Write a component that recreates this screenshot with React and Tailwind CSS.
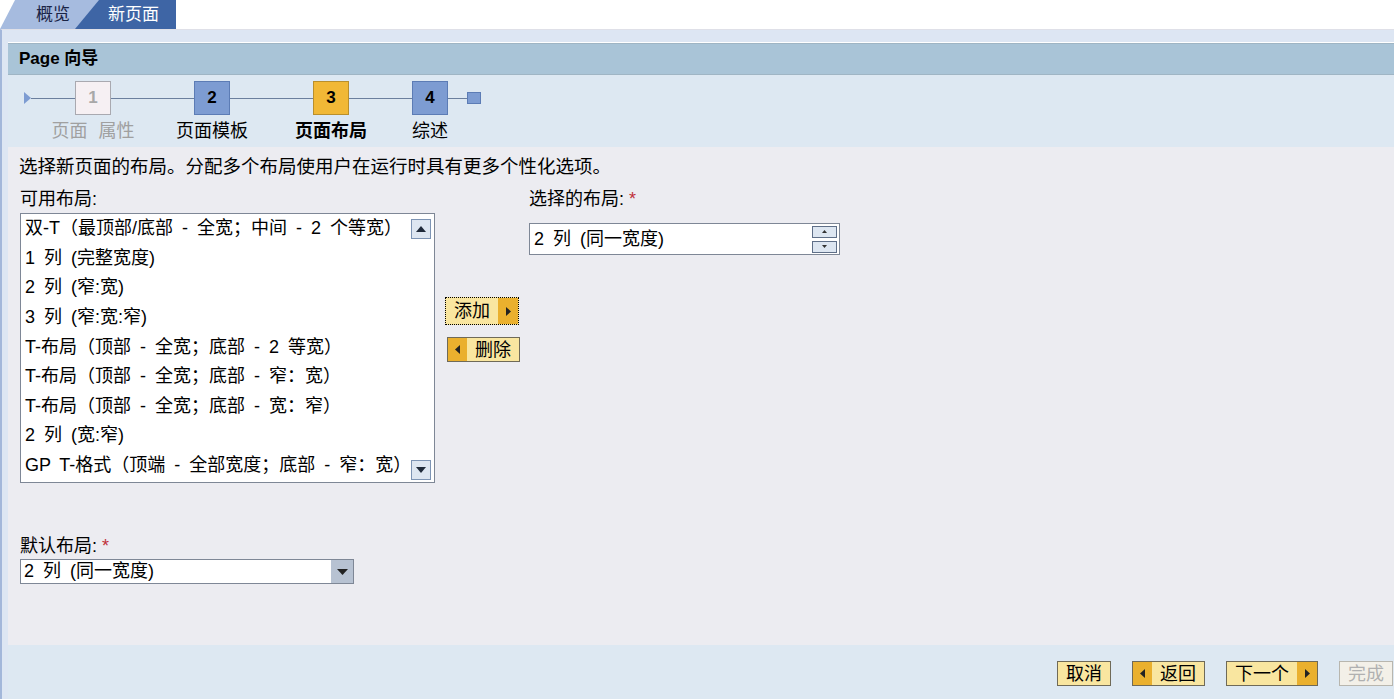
import React from "react";

const font = "font-['Liberation_Sans','Noto_Sans_CJK_SC',sans-serif]";

const layouts = [
  "双-T（最顶部/底部 - 全宽；中间 - 2 个等宽）",
  "1 列 (完整宽度)",
  "2 列 (窄:宽)",
  "3 列 (窄:宽:窄)",
  "T-布局（顶部 - 全宽；底部 - 2 等宽）",
  "T-布局（顶部 - 全宽；底部 - 窄：宽）",
  "T-布局（顶部 - 全宽；底部 - 宽：窄）",
  "2 列 (宽:窄)",
  "GP T-格式（顶端 - 全部宽度；底部 - 窄：宽）",
];

const steps = [
  { n: "1", label: "页面 属性", w: "w-[124px]", box: "bg-[#f6f0f3] border-[#a9a9b0] text-[#a8a8a8]", text: "text-[#a0a0a0]" },
  { n: "2", label: "页面模板", w: "w-[114px]", box: "bg-[#7d9cd2] border-[#5c7cb5] text-black", text: "text-black" },
  { n: "3", label: "页面布局", w: "w-[124px]", box: "bg-[#f1b836] border-[#b98f2c] text-black", text: "text-black font-bold" },
  { n: "4", label: "综述", w: "w-[74px]", box: "bg-[#7d9cd2] border-[#5c7cb5] text-black", text: "text-black" },
];

const Tri = ({ dir }) => (
  <svg width="7" height="11" viewBox="0 0 7 11">
    {dir === "right" ? (
      <polygon points="1,1 6,5.5 1,10" fill="#222" />
    ) : (
      <polygon points="6,1 1,5.5 6,10" fill="#222" />
    )}
  </svg>
);

const Btn = ({ children, arrow, focus, disabled, tall }) => (
  <div
    className={`flex ${tall ? "h-[28px]" : "h-[25px]"} items-stretch border ${
      disabled
        ? "border-[#b8b6ae] bg-[#f3f0e8] text-[#b0b0b0]"
        : focus
        ? "border-dotted border-black bg-[#f9e6a0] text-black"
        : "border-[#6f6a58] bg-[#f9e6a0] text-black"
    }`}
  >
    {arrow === "left" && (
      <span className="flex w-[19px] items-center justify-center bg-[#eab02e]">
        <Tri dir="left" />
      </span>
    )}
    <span className="flex items-center px-[8px] text-[18px] leading-none">{children}</span>
    {arrow === "right" && (
      <span className="flex w-[20px] items-center justify-center bg-[#eab02e]">
        <Tri dir="right" />
      </span>
    )}
  </div>
);

const ScrollBtn = ({ up }) => (
  <div className="flex h-[20px] w-[20px] items-center justify-center border border-[#7d94b4] bg-[#dde6f1]">
    <svg width="10" height="6" viewBox="0 0 10 6">
      {up ? <polygon points="0,6 5,0 10,6" fill="#1f2a3a" /> : <polygon points="0,0 5,6 10,0" fill="#1f2a3a" />}
    </svg>
  </div>
);

export default function App() {
  return (
    <div className={`min-h-[699px] w-[1394px] overflow-hidden bg-white text-black ${font}`}>
      {/* tabs */}
      <div className="flex h-[29px]">
        <div className="flex w-[100px] items-center bg-[#a6bbdf] pl-[36px] text-[17px] text-[#1a2446] [clip-path:polygon(0_100%,15px_0,100%_0,100%_100%)]">
          概览
        </div>
        <div className="-ml-[25px] flex w-[101px] items-center bg-[#3e65a5] pl-[33px] text-[17px] text-white [clip-path:polygon(0_100%,24px_0,100%_0,100%_100%)]">
          新页面
        </div>
      </div>

      <div className="border-l-2 border-t border-l-[#a3b7da] border-t-[#dfe0e8] bg-[#dde6f3] pl-[6px] pt-[12px]">
        <div className="border-t border-white">
          {/* header */}
          <div className="flex h-[32px] items-center border-y border-[#9fb5c4] bg-[#a9c4d7] pl-[11px] text-[17px] font-bold">
            Page 向导
          </div>

          {/* steps */}
          <div className="flex h-[72px] flex-col bg-[#dde8f2] pl-[16px] pt-[6px]">
            <div className="flex items-start">
              <div className="flex h-[34px] items-center">
                <svg width="7" height="12" viewBox="0 0 7 12">
                  <polygon points="0,0 7,6 0,12" fill="#7d9cd2" />
                </svg>
              </div>
              {steps.map((s) => (
                <div key={s.n} className={`flex flex-col items-center ${s.w}`}>
                  <div className="flex h-[34px] w-full items-center">
                    <div className="h-px flex-1 bg-[#6b7f9e]" />
                    <div className={`flex h-[34px] w-[36px] items-center justify-center border text-[17px] font-bold ${s.box}`}>
                      {s.n}
                    </div>
                    <div className="h-px flex-1 bg-[#6b7f9e]" />
                  </div>
                  <div className={`mt-[4px] whitespace-nowrap text-[18px] leading-[24px] [word-spacing:6px] ${s.text}`}>
                    {s.label}
                  </div>
                </div>
              ))}
              <div className="flex h-[34px] items-center">
                <div className="h-[12px] w-[14px] border border-[#5c7cb5] bg-[#7d9cd2]" />
              </div>
            </div>
          </div>

          {/* content */}
          <div className="h-[498px] bg-[#ececf1] pl-[11px] pt-[8px]">
            <div className="text-[18.5px] leading-[24px]">选择新页面的布局。分配多个布局使用户在运行时具有更多个性化选项。</div>

            <div className="mt-[8px] flex">
              <div className="w-[416px] pl-px">
                <div className="text-[18px] leading-[24px]">可用布局:</div>
                <div className="mt-[2px] flex h-[270px] w-[415px] border border-[#7e8796] bg-white">
                  <div className="flex-1 pl-[4px]">
                    {layouts.map((l) => (
                      <div key={l} className="flex h-[29.6px] items-center whitespace-nowrap text-[18px] [word-spacing:4px]">
                        {l}
                      </div>
                    ))}
                  </div>
                  <div className="flex w-[24px] flex-col justify-between pb-[2px] pt-[5px]">
                    <ScrollBtn up />
                    <ScrollBtn />
                  </div>
                </div>
              </div>

              <div className="flex w-[94px] flex-col items-start pl-[10px] pt-[110px]">
                <Btn arrow="right" focus tall>
                  添加
                </Btn>
                <div className="ml-[2px] mt-[12px]">
                  <Btn arrow="left">删除</Btn>
                </div>
              </div>

              <div>
                <div className="text-[18px] leading-[24px]">
                  选择的布局: <span className="text-[#c0303a]">*</span>
                </div>
                <div className="mt-[12px] flex h-[32px] w-[311px] items-center justify-between border border-[#7e8796] bg-white pl-[4px] pr-[2px]">
                  <span className="text-[18px] [word-spacing:4px]">2 列 (同一宽度)</span>
                  <div className="flex flex-col gap-[3px]">
                    <div className="flex h-[12px] w-[25px] items-center justify-center border border-[#5f6f88] bg-[#dde6f1]">
                      <svg width="5" height="3" viewBox="0 0 5 3"><polygon points="0,3 2.5,0 5,3" fill="#333" /></svg>
                    </div>
                    <div className="flex h-[12px] w-[25px] items-center justify-center border border-[#5f6f88] bg-[#dde6f1]">
                      <svg width="5" height="3" viewBox="0 0 5 3"><polygon points="0,0 2.5,3 5,0" fill="#333" /></svg>
                    </div>
                  </div>
                </div>
              </div>
            </div>

            <div className="mt-[50px] pl-px">
              <div className="text-[18px] leading-[26px]">
                默认布局: <span className="text-[#c0303a]">*</span>
              </div>
              <div className="flex h-[25px] w-[334px] items-center border border-[#7e8796] bg-white">
                <span className="flex-1 pl-[3px] text-[18px] [word-spacing:4px]">2 列 (同一宽度)</span>
                <div className="flex h-full w-[22px] items-center justify-center bg-[#b7c2d2]">
                  <svg width="11" height="6" viewBox="0 0 11 6"><polygon points="0,0 5.5,6 11,0" fill="#222" /></svg>
                </div>
              </div>
            </div>
          </div>

          {/* footer */}
          <div className="flex h-[54px] items-center justify-end gap-[21px] bg-[#dde8f2] pr-[1px] pt-[3px]">
            <Btn>取消</Btn>
            <Btn arrow="left">返回</Btn>
            <Btn arrow="right">下一个</Btn>
            <Btn disabled>完成</Btn>
          </div>
        </div>
      </div>
    </div>
  );
}
